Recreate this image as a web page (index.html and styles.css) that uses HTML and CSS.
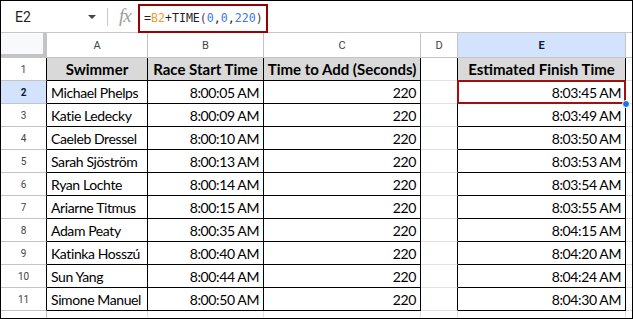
FILE: index.html
```html
<!DOCTYPE html>
<html>
<head>
<meta charset="utf-8">
<link rel="stylesheet" href="styles.css">
</head>
<body>
<div class="frame">
  <div class="fbar">
    <div class="namebox">E2</div>
    <div class="caret"></div>
    <div class="sep"></div>
    <div class="fx">fx</div>
    <div class="formula"><span class="k">=</span><span class="ref">B2</span><span class="k">+TIME</span><span class="p">(</span><span class="n">0</span><span class="k">,</span><span class="n">0</span><span class="k">,</span><span class="n">220</span><span class="p">)</span></div>
  </div>
  <div class="sheet">
    <div class="corner"></div>
    <div class="ch">A</div>
    <div class="ch">B</div>
    <div class="ch">C</div>
    <div class="ch">D</div>
    <div class="ch sel">E</div>
    <div class="ch last"></div>

    <div class="rh">1</div>
    <div class="c hd bl">Swimmer</div>
    <div class="c hd">Race Start Time</div>
    <div class="c hd">Time to Add (Seconds)</div>
    <div class="c d"></div>
    <div class="c hd">Estimated Finish Time</div>
    <div class="c x"></div>

    <div class="rh sel">2</div>
    <div class="c t">Michael Phelps</div>
    <div class="c r">8:00:05 AM</div>
    <div class="c r">220</div>
    <div class="c d"></div>
    <div class="c r active">8:03:45 AM<span class="box"></span><span class="handle"></span></div>
    <div class="c x"></div>

    <div class="rh">3</div>
    <div class="c t">Katie Ledecky</div>
    <div class="c r">8:00:09 AM</div>
    <div class="c r">220</div>
    <div class="c d"></div>
    <div class="c r">8:03:49 AM</div>
    <div class="c x"></div>

    <div class="rh">4</div>
    <div class="c t">Caeleb Dressel</div>
    <div class="c r">8:00:10 AM</div>
    <div class="c r">220</div>
    <div class="c d"></div>
    <div class="c r">8:03:50 AM</div>
    <div class="c x"></div>

    <div class="rh">5</div>
    <div class="c t">Sarah Sjöström</div>
    <div class="c r">8:00:13 AM</div>
    <div class="c r">220</div>
    <div class="c d"></div>
    <div class="c r">8:03:53 AM</div>
    <div class="c x"></div>

    <div class="rh">6</div>
    <div class="c t">Ryan Lochte</div>
    <div class="c r">8:00:14 AM</div>
    <div class="c r">220</div>
    <div class="c d"></div>
    <div class="c r">8:03:54 AM</div>
    <div class="c x"></div>

    <div class="rh">7</div>
    <div class="c t">Ariarne Titmus</div>
    <div class="c r">8:00:15 AM</div>
    <div class="c r">220</div>
    <div class="c d"></div>
    <div class="c r">8:03:55 AM</div>
    <div class="c x"></div>

    <div class="rh">8</div>
    <div class="c t">Adam Peaty</div>
    <div class="c r">8:00:35 AM</div>
    <div class="c r">220</div>
    <div class="c d"></div>
    <div class="c r">8:04:15 AM</div>
    <div class="c x"></div>

    <div class="rh">9</div>
    <div class="c t">Katinka Hosszú</div>
    <div class="c r">8:00:40 AM</div>
    <div class="c r">220</div>
    <div class="c d"></div>
    <div class="c r">8:04:20 AM</div>
    <div class="c x"></div>

    <div class="rh">10</div>
    <div class="c t">Sun Yang</div>
    <div class="c r">8:00:44 AM</div>
    <div class="c r">220</div>
    <div class="c d"></div>
    <div class="c r">8:04:24 AM</div>
    <div class="c x"></div>

    <div class="rh">11</div>
    <div class="c t">Simone Manuel</div>
    <div class="c r">8:00:50 AM</div>
    <div class="c r">220</div>
    <div class="c d"></div>
    <div class="c r">8:04:30 AM</div>
    <div class="c x"></div>

    <div class="rh e"></div>
    <div class="c e"></div>
    <div class="c e"></div>
    <div class="c e"></div>
    <div class="c e"></div>
    <div class="c e"></div>
    <div class="c e x"></div>
  </div>
</div>
</body>
</html>
```

FILE: styles.css
```css
* { box-sizing: border-box; }
html, body { margin: 0; padding: 0; background: #fff; }
body { width: 633px; height: 319px; overflow: hidden; }

.frame {
  width: 633px;
  height: 319px;
  border: 1px solid #000;
  overflow: hidden;
  display: flex;
  flex-direction: column;
  font-family: "Lato", "Liberation Sans", sans-serif;
}

.fbar {
  height: 32px;
  flex: none;
  border-bottom: 1px solid #c7c7c7;
  display: flex;
  align-items: center;
  position: relative;
}
.namebox {
  font-family: Roboto, "Liberation Sans", sans-serif;
  font-size: 14px;
  color: #1f1f1f;
  padding-left: 14px;
  width: 86px;
}
.caret {
  width: 0; height: 0;
  border-left: 4px solid transparent;
  border-right: 4px solid transparent;
  border-top: 4px solid #444;
  margin-top: 1px;
  margin-left: 1px;
}
.sep {
  width: 1px;
  height: 18px;
  background: #c7c7c7;
  margin-left: 11px;
}
.fx {
  font-family: "Liberation Serif", serif;
  font-style: italic;
  font-size: 19px;
  color: #9e9e9e;
  margin-left: 11px;
  width: 19px;
  letter-spacing: -1px;
  margin-top: -2px;
}
.formula {
  align-self: flex-end;
  height: 29px;
  width: 130px;
  border: 2px solid #990000;
  margin-bottom: -1px;
  position: relative;
  z-index: 2;
  background: #fff;
  font-family: "DejaVu Sans Mono", "Liberation Mono", monospace;
  font-size: 11.6px;
  line-height: 25px;
  padding-left: 4px;
  white-space: nowrap;
  color: #1f1f1f;
}
.formula .ref { color: #f29b2f; }
.formula .n { color: #3b78e7; }
.formula .p { color: #444; }

.sheet {
  display: grid;
  grid-template-columns: 46px 101px 116px 157px 37px 168px 6px;
  grid-template-rows: 25px repeat(11, 23px) 23px;
  flex: none;
}
.sheet > div {
  border-right: 1px solid #e1e1e1;
  border-bottom: 1px solid #e1e1e1;
}
.corner {
  background: #f8f9fa;
  border-right: 4px solid #c4c4c4 !important;
  border-bottom: 4px solid #c4c4c4 !important;
}
.ch {
  font-family: Roboto, "Liberation Sans", sans-serif;
  font-size: 11px;
  color: #444;
  display: flex;
  align-items: center;
  justify-content: center;
  border-right-color: #c4c4c4 !important;
  border-bottom-color: #c4c4c4 !important;
  padding-top: 1px;
}
.ch.sel {
  background: #d3e3fd;
  color: #0b1d3a;
  font-weight: 700;
}
.ch.last { border-right: none !important; }

.rh {
  font-family: Roboto, "Liberation Sans", sans-serif;
  font-size: 10px;
  color: #444;
  display: flex;
  align-items: center;
  justify-content: center;
  border-right-color: #000 !important;
  border-bottom-color: #c4c4c4 !important;
}
.rh.sel {
  background: #d3e3fd;
  color: #0b1d3a;
  font-weight: 700;
}
.rh.e { border-right-color: #c4c4c4 !important; }

.c {
  font-size: 14px;
  letter-spacing: -0.4px;
  color: #000;
  display: flex;
  align-items: center;
  padding: 0 4px;
  white-space: nowrap;
  border-right-color: #000 !important;
  border-bottom-color: #000 !important;
}
.c.hd {
  background: #d9d9d9;
  font-weight: 700;
  font-size: 15px;
  letter-spacing: 0;
  justify-content: center;
  padding: 0;
}
.c.t { justify-content: flex-start; }
.c.r { justify-content: flex-end; }
.c.d {
  border-bottom-color: #e1e1e1 !important;
  border-right-color: #000 !important;
}
.c.x {
  border-right: none !important;
  border-bottom-color: #e1e1e1 !important;
}
.c.e {
  border-right-color: #e1e1e1 !important;
  border-bottom-color: #e1e1e1 !important;
}
.c.e.x { border-right: none !important; }

.active { position: relative; }
.active .box {
  position: absolute;
  left: -1px; top: -1px; right: -1px; bottom: -1px;
  border: 2px solid #a50e0e;
}
.active .handle {
  position: absolute;
  right: -5px;
  bottom: -5px;
  width: 8px;
  height: 8px;
  border-radius: 50%;
  background: #1a73e8;
  border: 1px solid #fff;
  z-index: 3;
}
```
